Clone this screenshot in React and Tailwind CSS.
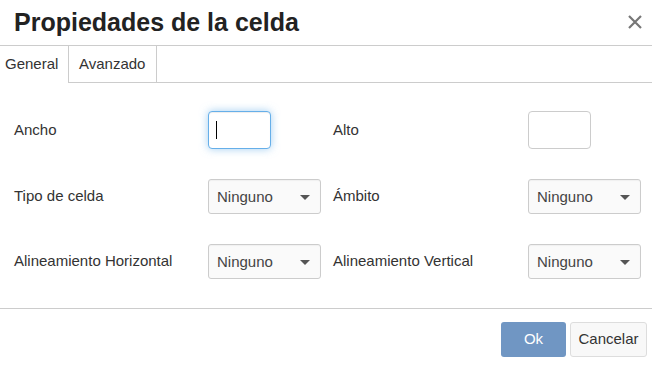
import React from "react";

function Select() {
  return (
    <div className="w-[113px] h-[35px] border border-[#cccccc] rounded-[3px] bg-[#fafafa] flex items-center justify-between pl-[8px] pr-[10px] shadow-[inset_0_1px_1px_rgba(0,0,0,0.04)]">
      <span className="text-[15px] text-[#444] pt-[2px]">Ninguno</span>
      <svg width="10" height="5" viewBox="0 0 10 5" className="mt-[1px]">
        <polygon points="0,0 10,0 5,5" fill="#555" />
      </svg>
    </div>
  );
}

function Label({ children }) {
  return <div className="flex items-center text-[15px] text-[#333]">{children}</div>;
}

export default function App() {
  return (
    <div className="w-[652px] h-[365px] bg-white overflow-hidden" style={{ fontFamily: '"Liberation Sans", Arial, sans-serif' }}>
      <div className="h-[46px] border-b border-[#cccccc] flex items-center justify-between pl-[14px] pr-[10px]">
        <h1 className="text-[25px] leading-[25px] font-bold text-[#222] mt-[-1px]">Propiedades de la celda</h1>
        <svg width="14" height="14" viewBox="0 0 14 14" className="mt-[-2px]">
          <path d="M1 1 L13 13 M13 1 L1 13" stroke="#777" strokeWidth="2.2" strokeLinecap="butt" />
        </svg>
      </div>
      <div className="flex h-[37px] text-[15px] text-[#333]">
        <div className="w-[69px] border-r border-[#cccccc] bg-white flex items-center pl-[5px]">General</div>
        <div className="w-[88px] border-r border-b border-[#cccccc] flex items-center pl-[10px]">Avanzado</div>
        <div className="flex-1 border-b border-[#cccccc]" />
      </div>
      <div className="pt-[28px] pb-[29px] pl-[14px] grid grid-cols-[194px_125px_195px_auto] grid-rows-[38px_35px_35px] gap-y-[30px]">
        <Label>Ancho</Label>
        <div>
          <div className="w-[63px] h-[38px] border border-[#66afe9] rounded-[4px] bg-white flex items-center pl-[7px] shadow-[inset_0_1px_1px_rgba(0,0,0,0.075),0_0_8px_rgba(102,175,233,0.6)]">
            <div className="w-[1px] h-[18px] bg-black" />
          </div>
        </div>
        <Label>Alto</Label>
        <div>
          <div className="w-[63px] h-[38px] border border-[#cccccc] rounded-[4px] bg-white" />
        </div>
        <Label>Tipo de celda</Label>
        <div><Select /></div>
        <Label>Ámbito</Label>
        <div><Select /></div>
        <Label>Alineamiento Horizontal</Label>
        <div><Select /></div>
        <Label>Alineamiento Vertical</Label>
        <div><Select /></div>
      </div>
      <div className="border-t border-[#cccccc] pt-[13px] pr-[5px] flex justify-end gap-[4px]">
        <button className="w-[65px] h-[35px] rounded-[3px] bg-[#7096c3] text-white text-[15px] flex items-center justify-center">Ok</button>
        <button className="w-[77px] h-[35px] rounded-[3px] bg-[#f8f8f8] border border-[#dddddd] text-[#333] text-[15px] flex items-center justify-center">Cancelar</button>
      </div>
    </div>
  );
}
